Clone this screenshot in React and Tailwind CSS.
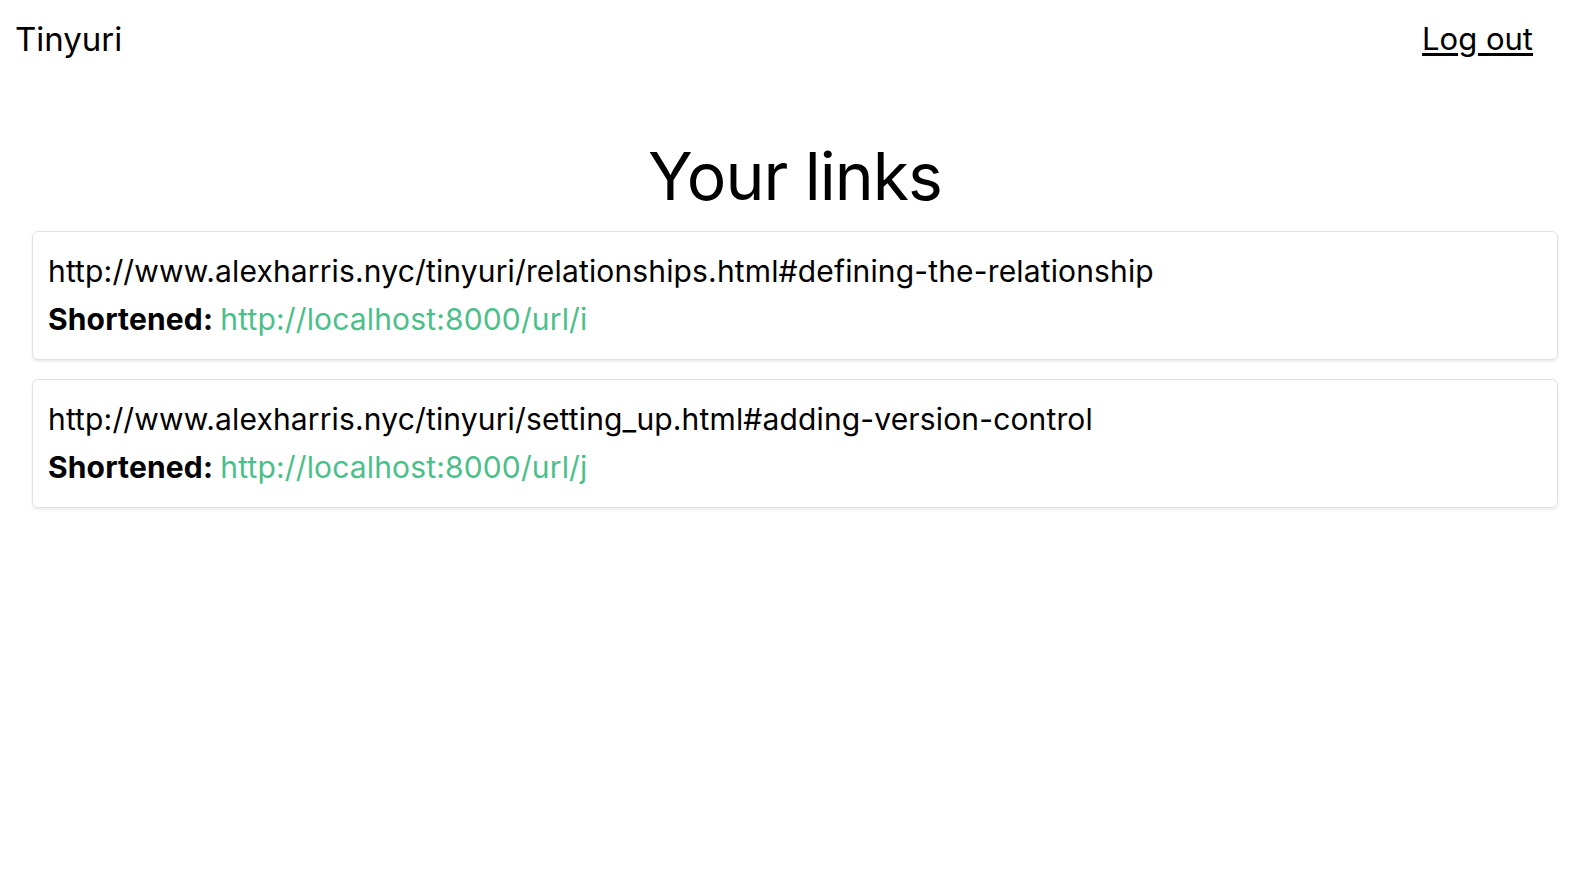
import React from "react";

const links = [
  {
    url: "http://www.alexharris.nyc/tinyuri/relationships.html#defining-the-relationship",
    short: "http://localhost:8000/url/i",
  },
  {
    url: "http://www.alexharris.nyc/tinyuri/setting_up.html#adding-version-control",
    short: "http://localhost:8000/url/j",
  },
];

const App = () => {
  return (
    <div className="min-h-screen bg-white text-black font-['Inter',sans-serif]">
      <nav className="flex items-start justify-between pl-[15px] pr-[57px] pt-[18px]">
        <span className="text-[33px] leading-[42px]">Tinyuri</span>
        <a href="#" className="text-[31px] leading-[40px] underline underline-offset-[3px] mt-[1px]">
          Log out
        </a>
      </nav>
      <h1 className="text-center text-[66px] leading-[80px] mt-[76px] tracking-[-1px]">Your links</h1>
      <div className="flex flex-col gap-[19px] mx-8 mt-[15px]">
        {links.map((link) => (
          <div
            key={link.short}
            className="border border-[#e2e2e6] rounded-[6px] shadow-[0_2px_3px_rgba(0,0,0,0.08)] pl-[15px] pr-4 pt-[15px] pb-[16px] text-[30px] leading-[48px] tracking-[0.15px]"
          >
            <p>{link.url}</p>
            <p>
              <span className="font-bold">Shortened: </span>
              <a href="#" className="text-[#4bbf8a]">
                {link.short}
              </a>
            </p>
          </div>
        ))}
      </div>
    </div>
  );
};

export default App;
